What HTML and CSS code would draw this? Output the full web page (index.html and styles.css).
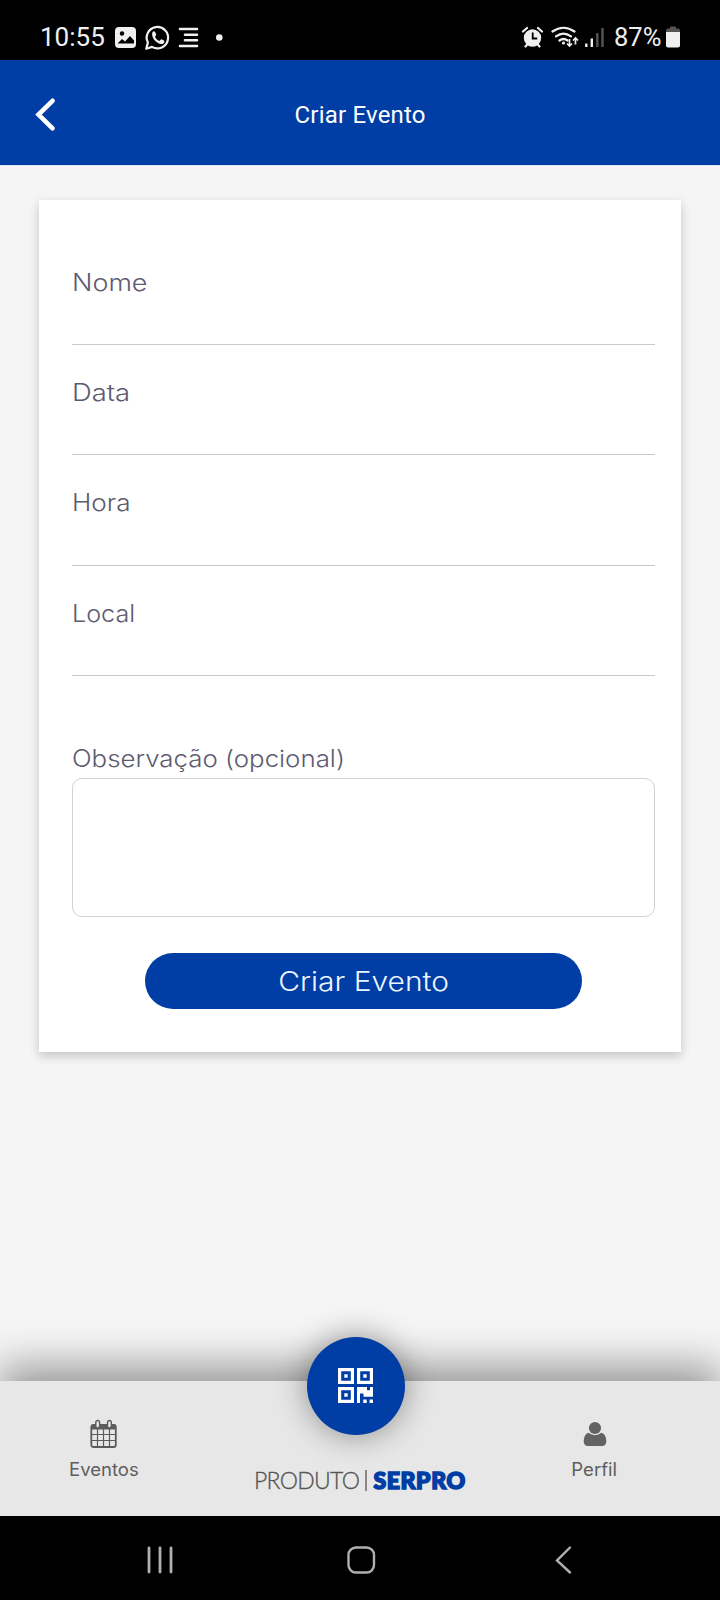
FILE: index.html
```html
<!DOCTYPE html>
<html lang="pt-BR">
<head>
<meta charset="utf-8">
<title>Criar Evento</title>
<link rel="stylesheet" href="styles.css">
</head>
<body>
<div class="screen">
  <div class="status">
    <span class="clock">10:55</span>
    <svg class="status-left" width="110" height="28" viewBox="0 0 110 28">
      <rect x="0" y="3" width="21" height="21" rx="4" fill="#f0f0f0"/>
      <circle cx="7" cy="9.5" r="2.2" fill="#000"/>
      <path d="M2.5 19.5L7 15l3 2.500 5-5.500 4 4.500v3z" fill="#000"/>
      <path d="M31.200 24.700l1.700-6.100a10.700 10.700 0 1 1 4.100 4.300z" fill="none" stroke="#f0f0f0" stroke-width="2.200" stroke-linejoin="round"/>
      <path d="M37.500 8c1-1 2.200-.8 2.700.3l1 2.300c.3.700-.9 1.600-1.200 2.300 1.100 2 2.400 3.100 4.400 4 .8-.3 1.400-1.900 2.200-1.600l2.300 1.100c.9.500.7 1.900-.3 2.800-4.300 3.600-13.600-5.200-11.100-11.200z" fill="#f0f0f0"/>
      <path d="M65 5h17M70 10.800h12M70 16.300h12M65 22h17" stroke="#f0f0f0" stroke-width="2.600" stroke-linecap="round"/>
      <circle cx="104.300" cy="13.500" r="3.300" fill="#f0f0f0"/>
    </svg>
    <svg class="status-right" width="84" height="24" viewBox="0 0 84 24">
      <circle cx="10.500" cy="12" r="8.700" fill="#f0f0f0"/>
      <path d="M1 5.500L5 2M20 5.500L16 2M3.500 20.500l2.500-3M17.500 20.500l-2.500-3" stroke="#f0f0f0" stroke-width="2.200" stroke-linecap="round"/>
      <path d="M10.700 6.500V12.500h4.500" fill="none" stroke="#000" stroke-width="1.800"/>
      <g fill="none" stroke="#f0f0f0" stroke-width="2.200" stroke-linecap="round">
        <path d="M30.500 5.500q11-7.500 22 0M34 10.300q7.500-5.500 15 0M37.500 14.500q4-3 8 0"/>
      </g>
      <circle cx="41.500" cy="17" r="1.600" fill="#f0f0f0"/>
      <path d="M47.500 13V20M45 17.500l2.500 2.500L50 17.500M53.500 18.500v-6.500M51 14.500l2.500-2.500L56 14.500" fill="none" stroke="#f0f0f0" stroke-width="1.700"/>
      <path d="M64.300 17.500V21M69.800 12.500V21" stroke="#f0f0f0" stroke-width="2.400"/>
      <path d="M75.300 7V21M80.500 2V21" stroke="#555" stroke-width="2.400"/>
    </svg>
    <span class="percent">87%</span>
    <svg class="battery" width="14" height="22" viewBox="0 0 14 22">
      <path d="M0 6V4.500Q0 2.500 2 2.500H4V1.500Q4 .5 5 .5H9Q10 .5 10 1.500V2.500H12Q14 2.500 14 4.500V6z" fill="#555"/>
      <path d="M0 6H14V19.500Q14 21.500 12 21.500H2Q0 21.500 0 19.500z" fill="#f0f0f0"/>
    </svg>
  </div>

  <header class="header">
    <svg class="back" width="20" height="34" viewBox="0 0 20 34"><path d="M17.500 3.800L3.500 17.600 17.500 31.300" fill="none" stroke="#fff" stroke-width="4.600" stroke-linecap="round"/></svg>
    <span class="title">Criar Evento</span>
  </header>

  <main class="main">
    <form class="card">
      <label class="field"><span class="label nome">Nome</span></label>
      <label class="field"><span class="label data">Data</span></label>
      <label class="field"><span class="label hora">Hora</span></label>
      <label class="field"><span class="label local">Local</span></label>
      <div class="notes">
        <span class="label observacao">Observação (opcional)</span>
        <div class="box"></div>
      </div>
      <div class="submit"><span>Criar Evento</span></div>
    </form>
  </main>

  <nav class="tabs">
    <div class="tab">
      <svg width="28" height="30" viewBox="0 0 28 30">
        <rect x="1.300" y="6" width="24.500" height="22" rx="2" fill="none" stroke="#5c5c5c" stroke-width="1.800"/>
        <path d="M1.500 5.500h24v5h-24z" fill="#5c5c5c"/>
        <path d="M7.500 10v18M13.500 10v18M19.500 10v18M2 15.500h24M2 21.500h24" stroke="#5c5c5c" stroke-width="1.200"/>
        <rect x="5.800" y="1.500" width="3.800" height="7.500" rx="1.900" fill="#e7e7e7" stroke="#5c5c5c" stroke-width="1.400"/>
        <rect x="17.500" y="1.500" width="3.800" height="7.500" rx="1.900" fill="#e7e7e7" stroke="#5c5c5c" stroke-width="1.400"/>
      </svg>
      <span class="tab-eventos">Eventos</span>
    </div>
    <div class="brand"><span class="produto">PRODUTO</span><i class="bar"></i><span class="serpro">SERPRO</span></div>
    <div class="tab">
      <svg width="24" height="30" viewBox="0 0 24 30">
        <circle cx="12" cy="9" r="6.100" fill="#636363"/>
        <path d="M5.500 13.800Q12 18.500 18.500 13.800Q23 15 23.300 22Q23.300 27 19 27H5Q.7 27 .7 22Q1 15 5.500 13.800z" fill="#636363"/>
      </svg>
      <span class="tab-perfil">Perfil</span>
    </div>
    <div class="fab">
      <svg width="36" height="36" viewBox="0 0 36 36">
        <path fill="#fff" fill-rule="evenodd" d="M0 0h16v16H0zM3.200 3.200v9.600h9.600V3.200zM19 0h16v16H19zM22.200 3.200v9.600h9.600V3.200zM0 19h16v16H0zM3.200 22.200v9.600h9.600v-9.600z"/>
        <path fill="#fff" d="M6.300 6.300h3.400v3.400H6.300zM25.300 6.300h3.400v3.400h-3.400zM6.300 25.300h3.400v3.400H6.300zM19 19h10v3.200h3V19h3v9.800h-9.500v-3.300H22V35h-3zM25.300 31.500h3.400V35h-3.400zM31.600 31.500H35V35h-3.400z"/>
      </svg>
    </div>
  </nav>

  <div class="system">
    <svg width="28" height="30" viewBox="0 0 28 30"><path d="M3 3V27M14 3V27M25 3V27" stroke="#b0b0b0" stroke-width="2.800" stroke-linecap="round"/></svg>
    <svg width="30" height="30" viewBox="0 0 30 30"><rect x="2.500" y="2.500" width="25.500" height="25" rx="7.500" fill="none" stroke="#b0b0b0" stroke-width="2.400"/></svg>
    <svg width="20" height="30" viewBox="0 0 20 30"><path d="M16 2.500L3 15.500 16 27.500" fill="none" stroke="#b0b0b0" stroke-width="2.400" stroke-linecap="round"/></svg>
  </div>
</div>
</body>
</html>
```
FILE: styles.css
```css
* { box-sizing: border-box; }
body { margin: 0; background: #f5f5f5; font-family: Inter, "Open Sans", sans-serif; }
svg { display: block; flex: none; }
span { white-space: nowrap; }
.screen { width: 720px; height: 1600px; display: flex; flex-direction: column; overflow: hidden; }

.status { height: 60px; flex: none; background: #000; color: #f0f0f0; display: flex; align-items: flex-start; padding: 22px 40px 0 40px; font: 26px/30px Roboto, sans-serif; }
.clock { width: 75px; }
.status-left { margin-top: 2px; }
.status-right { margin: 4px 9px 0 297px; }
.percent { width: 51px; font-size: 25.500px; line-height: 31px; margin: 0 1px 0 -1px; }
.battery { margin-top: 4px; }

.header { height: 105px; flex: none; background: #003da5; display: flex; align-items: flex-start; padding: 37px 36px 0 35px; color: #fff; }
.title { margin: 3px 0 0 239.500px; font: 24px/30px Roboto, sans-serif; letter-spacing: .2px; }

.main { flex: 1; background: #f5f5f5; padding: 34px 39px 0; border-top: 1px solid #dfe8f5; }
.card { width: 642px; height: 852px; background: #fff; padding: 35px 26px 0 33px; box-shadow: 0 4px 10px rgba(0,0,0,.2); }
.field { display: block; height: 110.200px; padding-top: 33px; border-bottom: 1px solid #c8c8c8; }
.label { display: inline-block; font-size: 23.500px; line-height: 30px; font-weight: 300; color: #5d5b70; vertical-align: top; transform-origin: 0 50%; }
.nome { transform: scaleX(1.145); }
.data { transform: scaleX(1.165); }
.hora { transform: scaleX(1.11); }
.local { transform: scaleX(1.07); }
.observacao { transform: scaleX(1.1); }
.notes { padding-top: 68px; display: flex; flex-direction: column; align-items: flex-start; }
.box { width: 583px; height: 139px; margin-top: 4px; border: 1.500px solid #d2d2d2; border-radius: 10px; }
.submit { width: 437px; height: 56px; margin: 36px 0 0 73px; border-radius: 28px; background: #003da5; color: #edf6ff; display: flex; justify-content: center; align-items: center; font-size: 26.500px; font-weight: 300; }
.submit span { transform: scaleX(1.13); }

.tabs { position: relative; height: 135px; flex: none; background: #e7e7e7; box-shadow: 0 -14px 40px 0 rgba(0,0,0,.4); display: grid; grid-template-columns: 207px 306px 163px; clip-path: inset(-100px 0 0 0); }
.tab { display: flex; flex-direction: column; align-items: center; padding-top: 38px; color: #5e5e5e; font-size: 18px; line-height: 24px; }
.tab span { margin-top: 9px; transform: scaleX(1.03); }
.brand { display: flex; align-items: center; align-self: start; height: 24px; margin: 87px 0 0 47px; font-size: 23px; }
.produto { width: 111px; font-family: Lato, sans-serif; font-weight: 300; color: #555; letter-spacing: -.7px; -webkit-text-stroke: .3px #555; }
.bar { width: 1.500px; height: 21px; background: #888; margin-right: 7px; }
.serpro { font-family: Lato, sans-serif; font-weight: 900; color: #003da5; letter-spacing: .6px; -webkit-text-stroke: 1.600px #003da5; }
.fab { position: absolute; left: 307px; top: -44px; width: 98px; height: 98px; border-radius: 50%; background: #003da5; box-shadow: 0 0 32px rgba(0,0,0,.4); display: flex; padding: 31px; }

.system { height: 84px; flex: none; background: #000; display: flex; align-items: flex-start; padding: 29px 0 0 146px; }
.system svg:nth-child(2) { margin-left: 172px; }
.system svg:nth-child(3) { margin-left: 178px; }
```
